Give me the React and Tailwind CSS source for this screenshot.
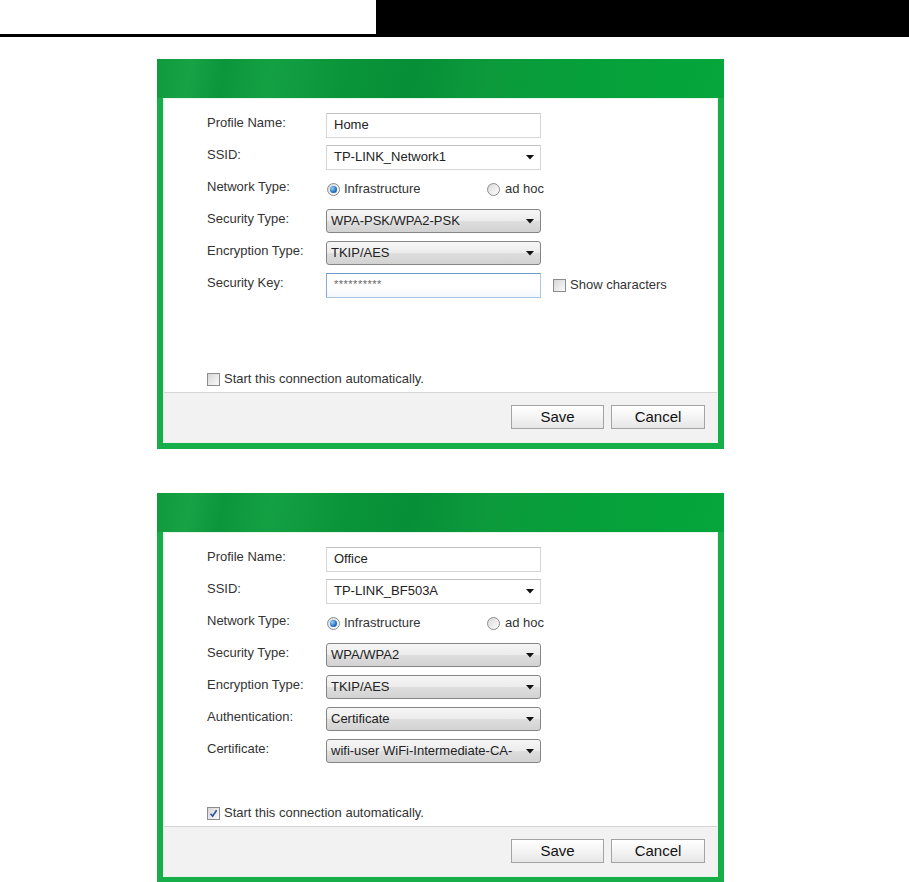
import React from "react";

const font = { fontFamily: '"Liberation Sans", Arial, sans-serif' };

function Arrow() {
  return (
    <svg width="8" height="5" viewBox="0 0 8 5" className="shrink-0">
      <path d="M0 0 H8 L4 4.5 Z" fill="#111" />
    </svg>
  );
}

function TextBox({ value, focused, password }) {
  return (
    <div
      className={
        "w-[215px] h-[25px] flex px-[7px] border " +
        (focused
          ? "items-start pt-[5px] border-[#a9c6e4] border-t-[#6d9acb] border-l-[#86abd6] bg-[linear-gradient(#ffffff_60%,#f3f8fc)]"
          : "items-center bg-white border-[#d6d6d6] border-t-[#c2c2c2]")
      }
    >
      {password ? (
        <span className="text-[11px] text-[#666] tracking-[0.5px] leading-none">{value}</span>
      ) : (
        <span className="text-[13px] text-[#222]">{value}</span>
      )}
    </div>
  );
}

function WhiteSelect({ value }) {
  return (
    <div className="w-[215px] h-[25px] flex items-center justify-between pl-[7px] pr-[6px] bg-white border border-[#d6d6d6] border-t-[#c2c2c2]">
      <span className="text-[13px] text-[#222]">{value}</span>
      <Arrow />
    </div>
  );
}

function GraySelect({ value }) {
  return (
    <div className="w-[215px] h-[24px] flex items-center justify-between pl-[4px] pr-[6px] rounded-[3px] border border-[#858585] bg-[linear-gradient(#f6f6f6_0%,#ececec_48%,#dedede_52%,#d2d2d2_100%)]">
      <span className="text-[13px] text-[#222] whitespace-nowrap">{value}</span>
      <Arrow />
    </div>
  );
}

function Radio({ checked }) {
  return (
    <span className="w-[13px] h-[13px] rounded-full border border-[#8c8c8c] bg-[linear-gradient(135deg,#d8d8d8,#ffffff)] flex items-center justify-center shrink-0">
      {checked && (
        <span className="w-[7px] h-[7px] rounded-full bg-[radial-gradient(circle_at_35%_35%,#9bd0f5,#1d6fc2_60%,#0f4f94)]" />
      )}
    </span>
  );
}

function Check({ checked }) {
  return (
    <span className="w-[13px] h-[13px] border border-[#8c8c8c] bg-[linear-gradient(135deg,#d6d6d6,#fbfbfb)] flex items-center justify-center shrink-0">
      {checked && (
        <svg width="9" height="9" viewBox="0 0 9 9">
          <path d="M1.5 4.8 L3.6 7.2 L7.6 1.2" stroke="#2f4f9a" strokeWidth="1.6" fill="none" />
        </svg>
      )}
    </span>
  );
}

function Row({ label, children }) {
  return (
    <div className="flex items-center h-[24px]">
      <span className="w-[119px] mb-[5px] text-[13px] text-[#333] shrink-0">{label}</span>
      {children}
    </div>
  );
}

function NetworkRow() {
  return (
    <Row label="Network Type:">
      <div className="flex items-center">
        <div className="w-[161px] flex items-center gap-[4px] pl-[1px]">
          <Radio checked />
          <span className="text-[13px] text-[#333]">Infrastructure</span>
        </div>
        <div className="flex items-center gap-[5px]">
          <Radio />
          <span className="text-[13px] text-[#333]">ad hoc</span>
        </div>
      </div>
    </Row>
  );
}

function Dialog({ children, autoChecked }) {
  return (
    <div className="ml-[157px] w-[567px] h-[390px] flex flex-col border-x-[6px] border-b-[6px] border-[#16ae48] bg-[#16ae48]">
      <div className="h-[39px] -mx-[6px] shrink-0 bg-[linear-gradient(100deg,#0f9a3e_0%,#17a246_6%,#0c963b_12%,#13a043_20%,#0a9439_34%,#078f37_45%,#0c9a3c_58%,#06a03a_75%,#05a63c_100%)]" />
      <div className="flex-1 flex flex-col bg-white border border-[#e6f4ea]">
        <div className="flex-1 flex flex-col pl-[43px] pt-[14px] gap-[8px]">
          {children}
          <div className="mt-auto mb-[5px] flex items-center gap-[4px] h-[16px]">
            <Check checked={autoChecked} />
            <span className="text-[13px] text-[#333]">Start this connection automatically.</span>
          </div>
        </div>
        <div className="h-[50px] shrink-0 border-t border-[#d5d5d5] bg-[#f2f2f2] flex justify-end items-start gap-[7px] pr-[12px] pt-[12px]">
          <button className="w-[93px] h-[24px] border border-[#a3a3a3] bg-[linear-gradient(#ffffff,#f4f4f4_50%,#e6e6e6)] text-[15px] text-[#111]">
            Save
          </button>
          <button className="w-[94px] h-[24px] border border-[#a3a3a3] bg-[linear-gradient(#ffffff,#f4f4f4_50%,#e6e6e6)] text-[15px] text-[#111]">
            Cancel
          </button>
        </div>
      </div>
    </div>
  );
}

export default function App() {
  return (
    <div className="w-[909px] h-[882px] bg-white overflow-hidden" style={font}>
      <div className="flex h-[37px]">
        <div className="w-[376px] border-b-[3px] border-black" />
        <div className="flex-1 bg-black" />
      </div>
      <div className="mt-[22px]">
        <Dialog autoChecked={false}>
          <Row label="Profile Name:">
            <TextBox value="Home" />
          </Row>
          <Row label="SSID:">
            <WhiteSelect value="TP-LINK_Network1" />
          </Row>
          <NetworkRow />
          <Row label="Security Type:">
            <GraySelect value="WPA-PSK/WPA2-PSK" />
          </Row>
          <Row label="Encryption Type:">
            <GraySelect value="TKIP/AES" />
          </Row>
          <Row label="Security Key:">
            <TextBox value="**********" focused password />
            <div className="flex items-center gap-[4px] ml-[12px]">
              <Check />
              <span className="text-[13px] text-[#333]">Show characters</span>
            </div>
          </Row>
        </Dialog>
      </div>
      <div className="mt-[44px]">
        <Dialog autoChecked>
          <Row label="Profile Name:">
            <TextBox value="Office" />
          </Row>
          <Row label="SSID:">
            <WhiteSelect value="TP-LINK_BF503A" />
          </Row>
          <NetworkRow />
          <Row label="Security Type:">
            <GraySelect value="WPA/WPA2" />
          </Row>
          <Row label="Encryption Type:">
            <GraySelect value="TKIP/AES" />
          </Row>
          <Row label="Authentication:">
            <GraySelect value="Certificate" />
          </Row>
          <Row label="Certificate:">
            <GraySelect value="wifi-user WiFi-Intermediate-CA-" />
          </Row>
        </Dialog>
      </div>
    </div>
  );
}
